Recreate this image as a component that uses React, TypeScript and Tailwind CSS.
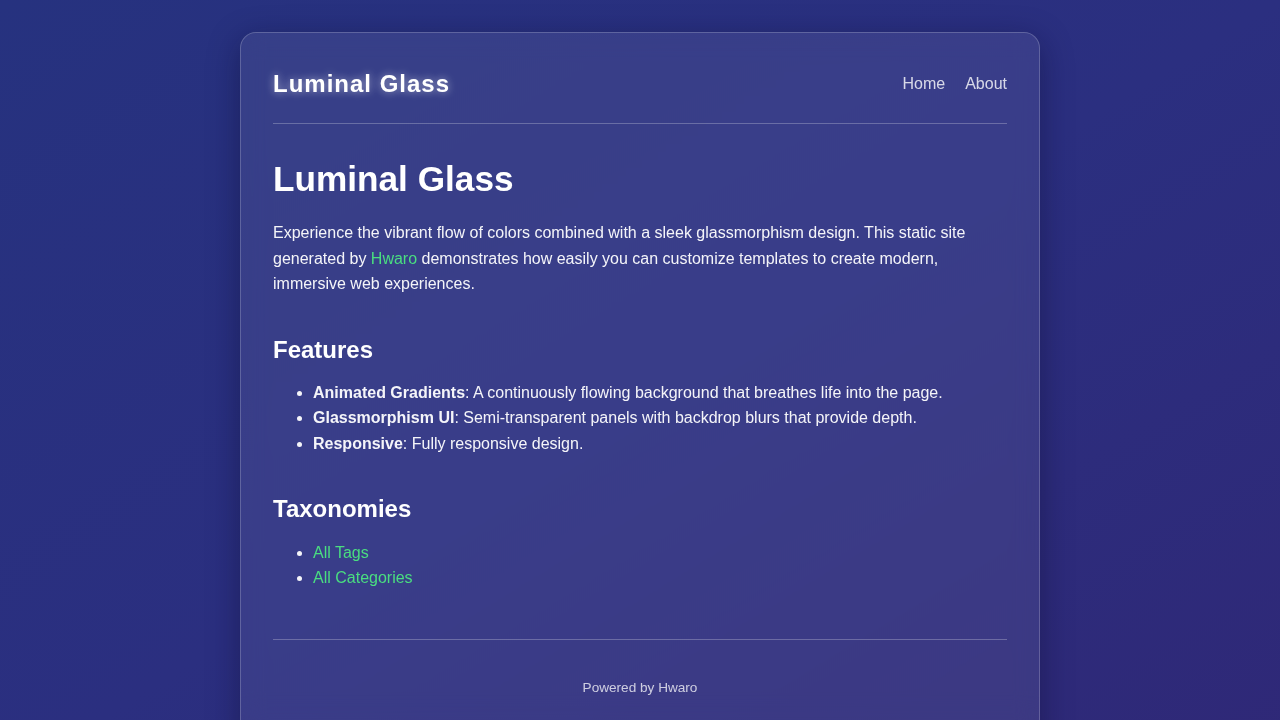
import React from "react";

export default function App() {
  return (
    <div
      className="min-h-screen w-full bg-gradient-to-br from-[#26327f] via-[#2b2f80] to-[#2f2877] pt-8 pb-8"
      style={{ fontFamily: '"Liberation Sans", Arial, sans-serif' }}
    >
      <div className="mx-auto w-[800px] rounded-2xl border border-white/20 bg-white/[0.07] px-8 pt-8 pb-12 text-white shadow-[0_8px_32px_rgba(10,10,50,0.45)] backdrop-blur-md">
        <header className="flex items-center justify-between border-b border-white/25 pt-[1px] pb-[21px]">
          <a className="text-[24px] font-bold leading-[36px] tracking-[1px] text-white [text-shadow:0_0_8px_rgba(255,255,255,0.55)]">
            Luminal Glass
          </a>
          <nav className="flex gap-5 text-[16px] leading-[24px] text-white/80">
            <a>Home</a>
            <a>About</a>
          </nav>
        </header>
        <main>
          <h1 className="mt-[34px] text-[35.2px] font-bold leading-[42px]">Luminal Glass</h1>
          <p className="mt-[20px] text-[16px] leading-[25.6px] text-white/95">
            Experience the vibrant flow of colors combined with a sleek glassmorphism design. This static site
            generated by <a className="text-[#4ade80]">Hwaro</a> demonstrates how easily you can customize templates to
            create modern, immersive web experiences.
          </p>
          <h2 className="mt-[38px] text-[24px] font-bold leading-[29px]">Features</h2>
          <ul className="mt-[16px] list-disc pl-10 text-[16px] leading-[25.6px] text-white/95">
            <li>
              <strong>Animated Gradients</strong>: A continuously flowing background that breathes life into the page.
            </li>
            <li>
              <strong>Glassmorphism UI</strong>: Semi-transparent panels with backdrop blurs that provide depth.
            </li>
            <li>
              <strong>Responsive</strong>: Fully responsive design.
            </li>
          </ul>
          <h2 className="mt-[37px] text-[24px] font-bold leading-[29px]">Taxonomies</h2>
          <ul className="mt-[17px] list-disc pl-10 text-[16px] leading-[25.6px] text-white/95">
            <li>
              <a className="text-[#4ade80]">All Tags</a>
            </li>
            <li>
              <a className="text-[#4ade80]">All Categories</a>
            </li>
          </ul>
        </main>
        <footer className="mt-[48px] border-t border-white/25 pt-[38px] text-center text-[13.6px] leading-[20px] text-white/75">
          Powered by Hwaro
        </footer>
      </div>
    </div>
  );
}
